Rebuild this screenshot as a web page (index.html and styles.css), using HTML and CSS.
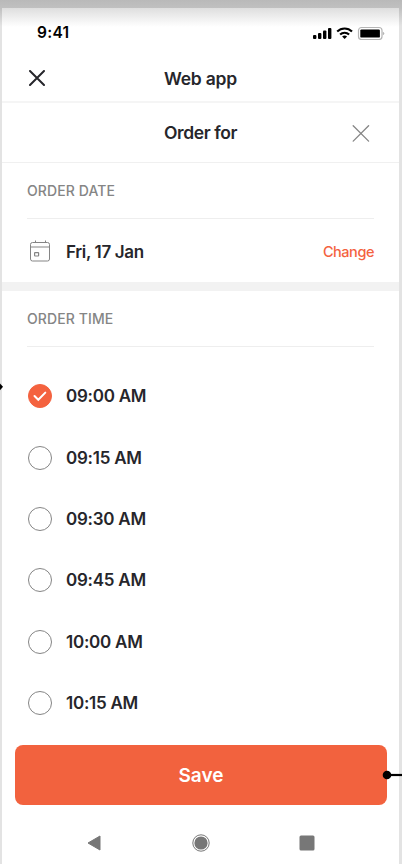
FILE: index.html
```html
<!DOCTYPE html>
<html lang="en">
<head>
  <meta charset="UTF-8" />
  <meta name="viewport" content="width=device-width, initial-scale=1.0"/>
  <title>Order for</title>
  <link rel="stylesheet" href="styles.css">
</head>
<body>
  <div class="screen">
    <div class="status-bar">
      <span class="clock">9:41</span>
      <svg class="status-icons" width="72" height="14" viewBox="0 0 72 14">
        <rect x="0" y="9" width="3.4" height="4" rx="1"/>
        <rect x="5" y="7" width="3.4" height="6" rx="1"/>
        <rect x="10" y="4.5" width="3.4" height="8.5" rx="1"/>
        <rect x="15" y="2" width="3.4" height="11" rx="1"/>
        <path d="M24.2 5.6a10.5 10.5 0 0 1 14.8 0M27.1 8.5a6.5 6.5 0 0 1 9 0" fill="none" stroke="#000" stroke-width="2.1"/>
        <path d="M29.1 10.6a3.8 3.8 0 0 1 5 0L31.6 13.1z"/>
        <rect x="45.5" y="1.5" width="23.5" height="12" rx="3" fill="none" stroke="#b5b5b5" stroke-width="1.2"/>
        <rect x="47.3" y="3.4" width="19.6" height="8.2" rx="1.2"/>
        <path d="M69.8 5.7q1.5.6 1.5 1.8t-1.5 1.8z" fill="#b5b5b5"/>
      </svg>
    </div>

    <div class="title-bar">
      <button class="icon-button"><svg width="16" height="16" viewBox="0 0 16 16"><path d="M1 1l14 14M15 1L1 15" stroke="#26262b" stroke-width="2" stroke-linecap="round"/></svg></button>
      <h1 class="web-title">Web app</h1>
    </div>

    <div class="sheet-bar">
      <h2 class="order-title">Order for</h2>
      <button class="icon-button"><svg width="18" height="18" viewBox="0 0 18 18"><path d="M1.2 1.7l15.4 15.4M16.6 1.7L1.2 17.1" stroke="#858585" stroke-width="1.3" stroke-linecap="round"/></svg></button>
    </div>

    <div class="section date-section">
      <div class="section-label">ORDER DATE</div>
      <div class="date-row">
        <svg width="26" height="24" viewBox="0 0 26 24" fill="none" stroke="#858585">
          <rect x="3.5" y="3.5" width="19" height="18.5" rx="2"/>
          <path d="M3.5 8h19M8.5 1.5v2M18.5 1.5v2"/>
          <rect x="7.6" y="13.6" width="4" height="3.4" rx=".5" stroke-width="1.2"/>
        </svg>
        <span class="date">Fri, 17 Jan</span>
        <button class="change">Change</button>
      </div>
    </div>

    <div class="section time-section">
      <div class="section-label">ORDER TIME</div>
      <div class="times">
        <div class="time-row"><span class="radio checked"><svg width="14" height="12" viewBox="0 0 14 12"><path d="M1.5 6l3.8 3.8L12.3 2.6" fill="none" stroke="#fff" stroke-width="2" stroke-linecap="round"/></svg></span><span class="time">09:00 AM</span></div>
        <div class="time-row"><span class="radio"></span><span class="time">09:15 AM</span></div>
        <div class="time-row"><span class="radio"></span><span class="time">09:30 AM</span></div>
        <div class="time-row"><span class="radio"></span><span class="time">09:45 AM</span></div>
        <div class="time-row"><span class="radio"></span><span class="time">10:00 AM</span></div>
        <div class="time-row"><span class="radio"></span><span class="time">10:15 AM</span></div>
      </div>
    </div>

    <button class="save">Save</button>

    <div class="nav-bar">
      <svg width="14" height="16" viewBox="0 0 14 16"><path d="M13 1v14L1 8z" fill="#777" stroke="#777" stroke-linejoin="round"/></svg>
      <svg class="home" width="18" height="18" viewBox="0 0 18 18"><circle cx="9" cy="9" r="8.2" fill="none" stroke="#777"/><circle cx="9" cy="9" r="6.6" fill="#777"/></svg>
      <svg width="16" height="16" viewBox="0 0 16 16"><rect x=".5" y=".5" width="15" height="15" rx="1.5" fill="#777"/></svg>
    </div>
  </div>

  <!-- flow connectors -->
  <svg class="flow-in" width="4" height="8" viewBox="0 0 4 8"><path d="M0 .5l3 3.3L0 7.2z"/></svg>
  <svg class="flow-out" width="20" height="10" viewBox="0 0 20 10"><circle cx="5" cy="5" r="4.3"/><path d="M5 5h15" stroke="#000" stroke-width="2.2"/></svg>
</body>
</html>
```

FILE: styles.css
```css
* {
  box-sizing: border-box;
}

body {
  font-family: Inter, 'Liberation Sans', sans-serif;
  background-color: #e3e3e3;
  color: #26262b;
  margin: 0;
  height: 864px;
  padding: 8px 3px 0 2px;
  background-image: linear-gradient(#b9b9b9, #c0c0c0 8px, #e3e3e3 26px);
  position: relative;
  overflow: hidden;
}

button {
  border: none;
  background: none;
  padding: 0;
  font-family: inherit;
  cursor: pointer;
}

svg {
  display: block;
}

h1, h2 {
  margin: 0;
  font-weight: 600;
  line-height: 24px;
}

.screen {
  height: 856px;
  background: linear-gradient(#dedede, #fff 19px);
  display: flex;
  flex-direction: column;
}

.status-bar {
  height: 47px;
  padding: 2px 14px 0 35px;
  display: flex;
  align-items: center;
  justify-content: space-between;
}

.clock {
  color: #000;
  font-size: 15.5px;
  font-weight: 600;
  letter-spacing: 0.3px;
}

.title-bar,
.sheet-bar {
  display: grid;
  grid-template-columns: 52px 1fr 52px;
  align-items: center;
  text-align: center;
}

.title-bar {
  height: 48px;
  border-bottom: 2px solid #f5f5f5;
}

.title-bar .icon-button {
  padding-left: 27px;
}

.web-title {
  font-size: 17.5px;
  letter-spacing: -0.2px;
  padding-top: 2px;
}

.sheet-bar {
  height: 60px;
  border-bottom: 1px solid #f0f0f0;
}

.order-title {
  grid-column: 2;
  font-size: 17.5px;
  letter-spacing: -0.4px;
}

.sheet-bar .icon-button {
  padding-left: 5px;
}

.section {
  padding: 0 25px;
}

.section-label {
  height: 56px;
  line-height: 56px;
  color: #858585;
  font-size: 14px;
  font-weight: 500;
  letter-spacing: 0.1px;
  border-bottom: 1px solid #eee;
}

.date-section {
  height: 128px;
  border-bottom: 9px solid #f2f2f2;
}

.date-row {
  height: 64px;
  display: flex;
  align-items: center;
}

.date {
  margin-left: 13px;
  padding-top: 1px;
  font-size: 17px;
  font-weight: 600;
  letter-spacing: -0.35px;
}

.change {
  margin-left: auto;
  color: #f4623f;
  font-size: 14.5px;
  font-weight: 500;
  letter-spacing: -0.45px;
}

.times {
  padding-top: 18.6px;
}

.time-row {
  height: 61.4px;
  padding-left: 1px;
  display: flex;
  align-items: center;
  gap: 14px;
}

.radio {
  width: 24px;
  height: 24px;
  border: 1px solid #858585;
  border-radius: 50%;
  display: flex;
  align-items: center;
  justify-content: center;
}

.checked {
  background-color: #f4623f;
  border-color: #f4623f;
}

.time {
  font-size: 17px;
  font-weight: 600;
  letter-spacing: -0.25px;
}

.save {
  flex: none;
  width: 372px;
  height: 60px;
  margin: auto 0 0 13px;
  border-radius: 8px;
  background-color: #f2623e;
  color: #fff;
  font-size: 19px;
  font-weight: 600;
}

.nav-bar {
  flex: none;
  height: 59px;
  padding: 17px 84px 0 85px;
  display: flex;
  align-items: center;
  justify-content: space-between;
}

.home {
  margin-left: 1px;
}

.flow-in {
  position: absolute;
  left: 0;
  top: 383px;
}

.flow-out {
  position: absolute;
  right: 0;
  top: 770px;
}
```
